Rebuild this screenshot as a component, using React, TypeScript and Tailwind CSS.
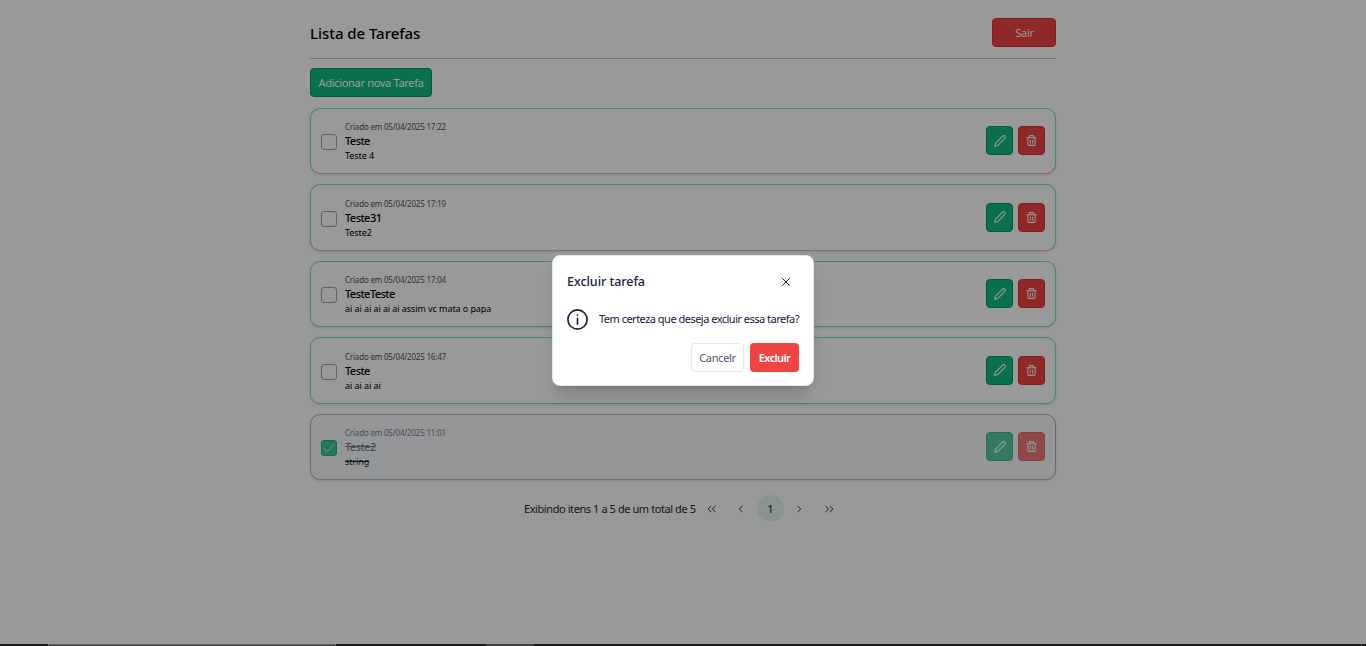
import React from "react";

type Task = { date: string; title: string; text: string; border: string; done?: boolean };

const tasks: Task[] = [
  { date: "05/04/2025 17:22", title: "Teste", text: "Teste 4", border: "border-x-[#6ee7b7] border-t-[#6ee7b7] border-b-[#e3b4c2]" },
  { date: "05/04/2025 17:19", title: "Teste31", text: "Teste2", border: "border-x-[#6ee7b7] border-t-[#6ee7b7] border-b-[#e3b4c2]" },
  { date: "05/04/2025 17:04", title: "TesteTeste", text: "ai ai ai ai ai ai assim vc mata o papa", border: "border-[#6ee7b7]" },
  { date: "05/04/2025 16:47", title: "Teste", text: "ai ai ai ai", border: "border-[#6ee7b7]" },
  { date: "05/04/2025 11:01", title: "Teste2", text: "string", border: "border-[#b0b4c0]", done: true },
];

function Icon({ children, size = 12, width = 1 }: { children: React.ReactNode; size?: number; width?: number }) {
  return (
    <svg width={size} height={size} viewBox="0 0 14 14" fill="none" stroke="currentColor" strokeWidth={width} strokeLinecap="round" strokeLinejoin="round" className="shrink-0">
      {children}
    </svg>
  );
}

const Pencil = () => (
  <Icon size={12} width={1.3}>
    <path d="M.8 13.200l.9-3.400L10 1.400a1.800 1.800 0 0 1 2.600 2.600L4.300 12.300z" />
  </Icon>
);

const Trash = () => (
  <Icon size={11} width={1.3}>
    <path d="M1 3.500h12M4.200 3.300V1.800c0-.6.4-1 1-1h3.600c.6 0 1 .4 1 1v1.500M2.400 3.600v8.200c0 .8.6 1.400 1.400 1.400h6.400c.8 0 1.400-.6 1.400-1.400V3.600M5.500 6.500v4M8.500 6.500v4" />
  </Icon>
);

function TaskCard({ task }: { task: Task }) {
  const done = task.done;
  return (
    <div className={`flex h-[66.3px] shrink-0 items-center rounded-[10px] border px-[10px] shadow-sm ${task.border} ${done ? "bg-[#f8fafc]" : "bg-white"}`}>
      {done ? (
        <span className="mt-[2px] flex size-4 items-center justify-center rounded-[3px] border border-[#10b981] bg-[#10b981]/80 text-white">
          <Icon size={12}><path d="M1.200 7.400l3.800 3.800L12.800 3" /></Icon>
        </span>
      ) : (
        <span className="mt-[2px] size-4 rounded-[3px] border border-[#94a3b8] bg-white" />
      )}
      <div className="ml-2 flex flex-1 flex-col whitespace-nowrap">
        <span className={`h-[13px] text-[8px] leading-[13px] tracking-[-0.19px] ${done ? "text-[#7b8493]" : "text-[#475569]"}`}>Criado em {task.date}</span>
        <span className={`h-[15px] text-[11px] leading-[15px] font-medium tracking-[-0.54px] ${done ? "text-[#7b8493] line-through" : "text-black"}`}>{task.title}</span>
        <span className={`h-[14px] text-[9px] leading-[15px] tracking-[-0.08px] ${done ? "text-[#1e293b] line-through" : "text-black"}`}>{task.text}</span>
      </div>
      <div className={`mt-[-1px] flex gap-[5px] text-white ${done ? "opacity-70" : ""}`}>
        <button className="flex h-[29px] w-[27px] items-center justify-center rounded border border-[#059652] bg-[#10b981]"><Pencil /></button>
        <button className="flex h-[29px] w-[27px] items-center justify-center rounded border border-[#dc2f35] bg-[#ef4444]"><Trash /></button>
      </div>
    </div>
  );
}

export default function App() {
  return (
    <div className="relative h-[646px] w-full overflow-hidden bg-white font-['Noto_Sans',sans-serif] text-black">
      <main className="mx-auto flex w-[746px] flex-col">
        <header className="flex h-[59px] items-start justify-between border-b border-[#b4bfd0] pt-[18px]">
          <h1 className="text-[15px] leading-[31px] font-medium tracking-[-0.05px]">Lista de Tarefas</h1>
          <button className="h-[29px] w-16 rounded border border-[#dc2f35] bg-[#ef4444] pl-px text-[11px] leading-none tracking-[-0.3px] text-white">Sair</button>
        </header>
        <button className="mt-[9px] h-[29px] w-[122px] rounded border border-[#059652] bg-[#10b981] text-[11px] leading-none tracking-[-0.31px] whitespace-nowrap text-white">Adicionar nova Tarefa</button>
        <section className="mt-[11px] flex flex-col gap-[10.2px]">
          {tasks.map((t) => <TaskCard key={t.date} task={t} />)}
        </section>
        <nav className="mt-[14.7px] ml-[214px] flex h-7 items-center text-[11px] text-[#1e293b]">
          <span className="w-[173px] tracking-[-0.42px] whitespace-nowrap">Exibindo itens 1 a 5 de um total de 5</span>
          <span className="flex w-[29px] justify-center"><Icon size={10} width={1.3}><path d="M5.500 3.200L1.500 7l4 3.800M11.500 3.200L7.500 7l4 3.800" /></Icon></span>
          <span className="flex w-[31px] justify-center pr-px"><Icon size={10} width={1.3}><path d="M8.500 3.200L4.500 7l4 3.800" /></Icon></span>
          <span className="flex size-[27px] items-center justify-center rounded-full bg-[#e6f7ef] font-medium text-[#064e3b]">1</span>
          <span className="flex w-[30px] justify-center"><Icon size={10} width={1.3}><path d="M5.500 3.200l4 3.800-4 3.800" /></Icon></span>
          <span className="flex w-[29px] justify-center"><Icon size={10} width={1.3}><path d="M2.500 3.200l4 3.800-4 3.800M8.500 3.200l4 3.800-4 3.800" /></Icon></span>
        </nav>
      </main>

      <div className="absolute inset-0 flex items-start justify-center bg-black/40 pt-[255px]">
        <div role="dialog" className="flex h-[131px] w-[262px] flex-col rounded-lg border border-[#e2e8f0] bg-white px-[14px] text-[#15203c] shadow-[0_14px_18px_-4px_rgba(0,0,0,0.13),0_5px_7px_-4px_rgba(0,0,0,0.13)]">
          <div className="mt-[14px] flex h-6 items-center justify-between">
            <h2 className="pt-px text-[12.5px] font-medium tracking-[-0.04px]">Excluir tarefa</h2>
            <span className="mr-2"><Icon size={10} width={1.4}><path d="M2 2l10 10M12 2L2 12" /></Icon></span>
          </div>
          <div className="mt-[14px] flex h-[22px] items-center gap-[11px]">
            <Icon size={21} width={1.1}>
              <circle cx="7" cy="7" r="6.400" />
              <path d="M7 6.200v4M7 4v.1" />
            </Icon>
            <span className="text-[11px] tracking-[-0.51px] whitespace-nowrap">Tem certeza que deseja excluir essa tarefa?</span>
          </div>
          <div className="mt-[13px] flex justify-end gap-[6px] text-[11px]">
            <button className="h-[29px] w-[53px] rounded border border-[#e2e8f0] pt-px tracking-[-0.32px] text-[#475569]">Cancelr</button>
            <button className="h-[29px] w-[49px] rounded bg-[#ef4444] pt-px font-semibold tracking-[-0.58px] text-white">Excluir</button>
          </div>
        </div>
      </div>

      <div className="absolute inset-x-0 bottom-0 flex h-[2px] bg-[#1c191a]">
        <span className="ml-12 w-[288px] border-x border-t border-[#666] bg-[#3d3a3b]" />
        <span className="ml-[150px] w-12 bg-[#444142]" />
        <span className="mr-[4px] ml-auto w-px bg-[#555]" />
      </div>
    </div>
  );
}
